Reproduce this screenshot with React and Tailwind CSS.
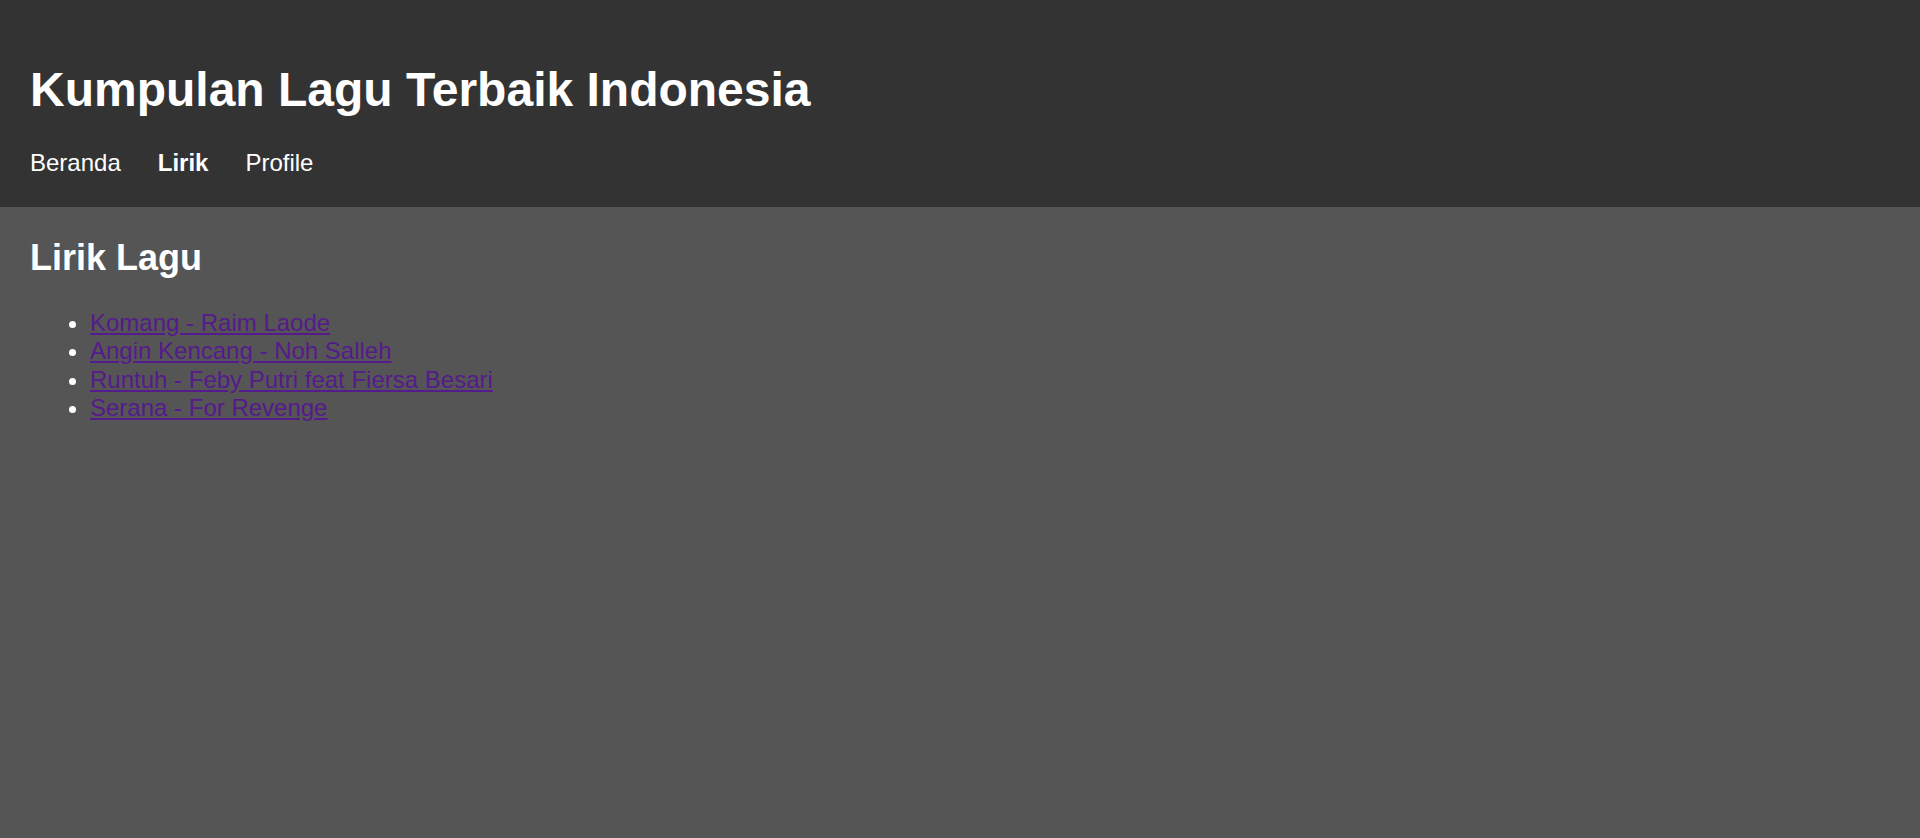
const songs = [
  'Komang - Raim Laode',
  'Angin Kencang - Noh Salleh',
  'Runtuh - Feby Putri feat Fiersa Besari',
  'Serana - For Revenge',
];

/* ── Header ─────────────────────────────────────────── */
function Header() {
  return (
    <header className="bg-[#333333] px-[30px] pt-[30px] pb-[30px] text-white">
      <h1 className="mb-[32px] mt-[32px] text-[48px] font-bold leading-[1.15]">
        Kumpulan Lagu Terbaik Indonesia
      </h1>
      <nav className="flex gap-[37px] text-[24px] leading-[1.15]">
        <a href="#" className="text-white">Beranda</a>
        <a href="#" className="font-bold text-white">Lirik</a>
        <a href="#" className="text-white">Profile</a>
      </nav>
    </header>
  );
}

/* ── Lyrics list ────────────────────────────────────── */
function Lirik() {
  return (
    <main className="flex-1 bg-[#555555] px-[30px] text-white">
      <h2 className="mb-[31px] mt-[30px] text-[36px] font-bold leading-[1.15]">Lirik Lagu</h2>
      <ul className="list-disc pl-[60px] text-[24px] leading-[28.2px]">
        {songs.map(s => (
          <li key={s}>
            <a href="#" className="text-[#551a8b] underline">{s}</a>
          </li>
        ))}
      </ul>
    </main>
  );
}

export default function App() {
  return (
    <div className="flex min-h-screen flex-col font-['Liberation_Sans',Arial,sans-serif]">
      <Header />
      <Lirik />
    </div>
  );
}
